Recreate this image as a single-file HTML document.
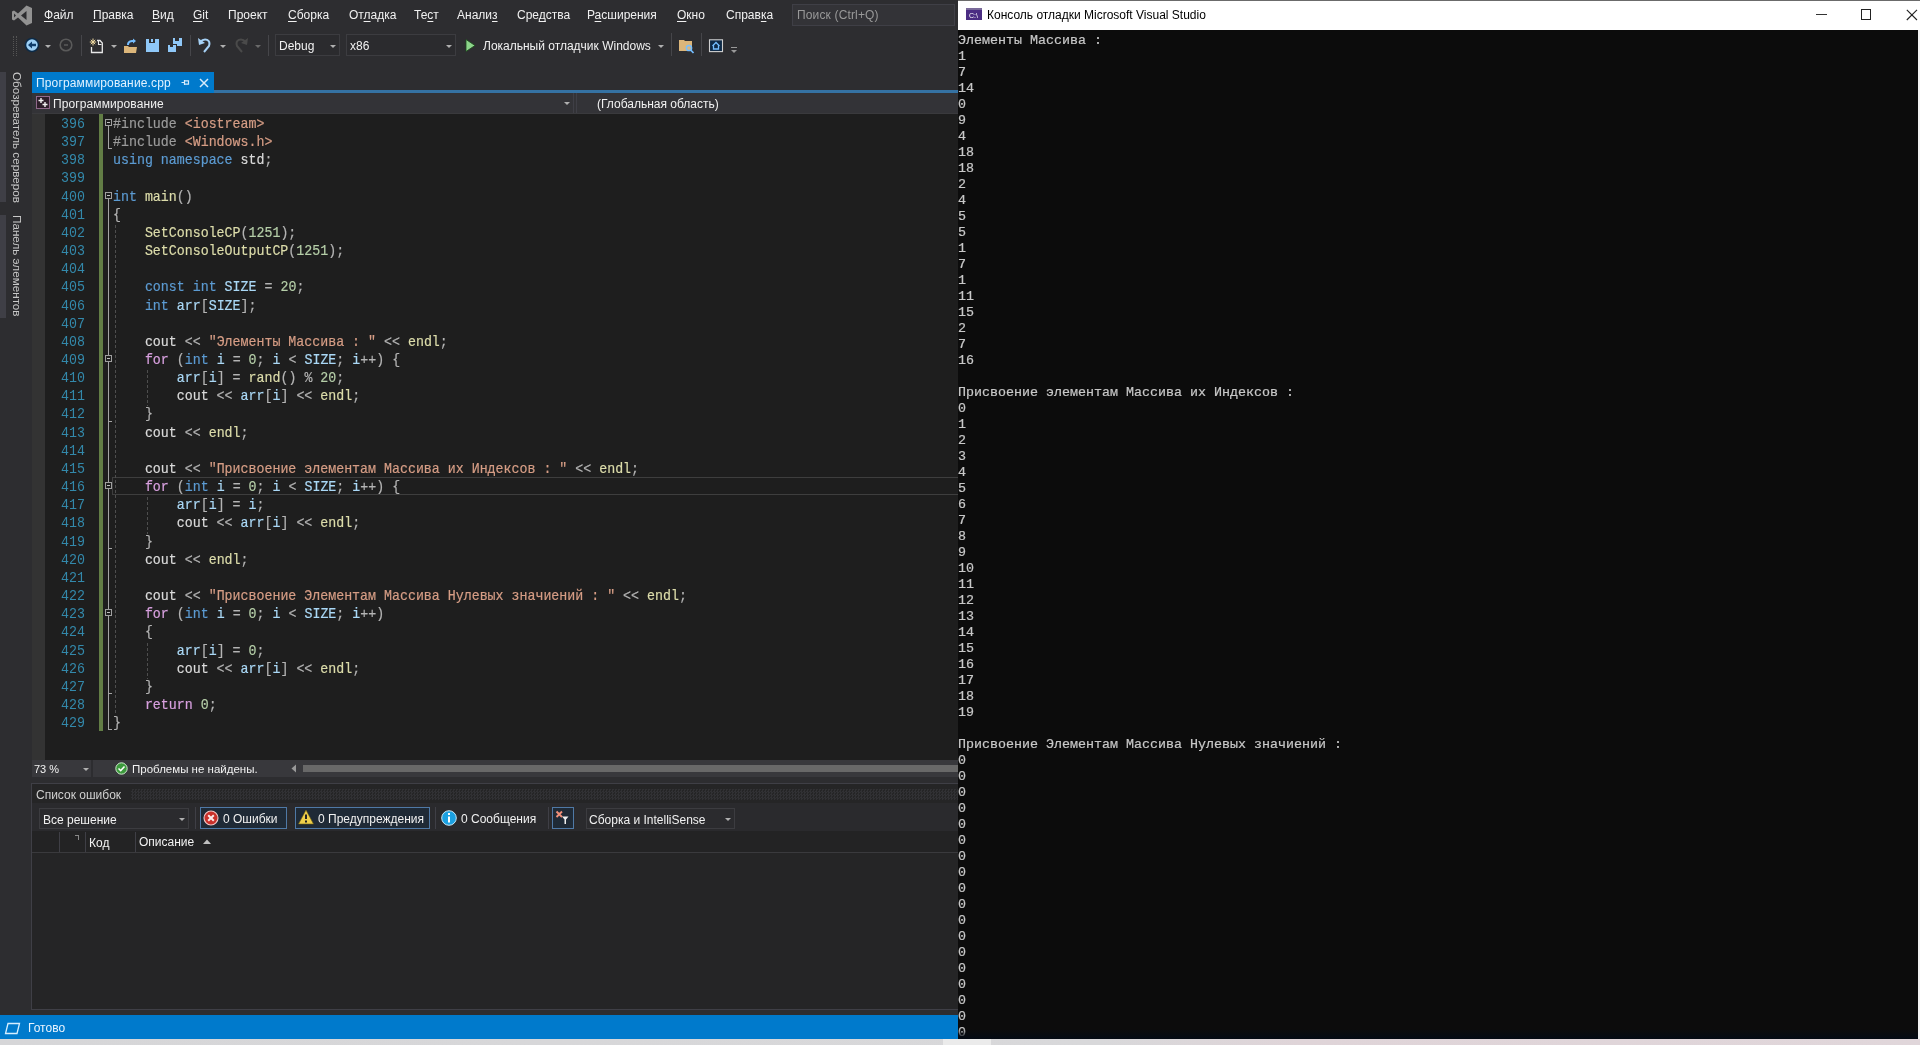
<!DOCTYPE html>
<html><head><meta charset="utf-8">
<style>
*{margin:0;padding:0;box-sizing:border-box}
html,body{will-change:transform;width:1920px;height:1045px;overflow:hidden;background:#2d2d30;font-family:"Liberation Sans",sans-serif;position:relative}
.a{position:absolute}
u{text-decoration:underline;text-underline-offset:2px;text-decoration-thickness:1px}
.mt{font-size:12px;color:#f1f1f1;white-space:nowrap;line-height:14px}
.code{left:113px;-webkit-text-stroke:0.2px;transform:scaleX(0.8853);transform-origin:0 0;font-family:"Liberation Mono",monospace;font-size:15px;line-height:18.16px;white-space:pre;color:#dcdcdc}
.ln{left:44px;transform:scaleX(0.8853);transform-origin:100% 0;font-family:"Liberation Mono",monospace;font-size:15px;line-height:18.16px;color:#3389ab;text-align:right;width:41px}
.kw{color:#5c9bd2}.fl{color:#d8a0df}.fn{color:#dcdcaa}.st{color:#d69d85}.nu{color:#b5cea8}.va{color:#aad8f6}.pu{color:#b4b4b4}.pp{color:#9b9b9b}.gl{color:#dadada}
.con{font-family:"Liberation Mono",monospace;font-size:13.33px;white-space:pre;color:#c8c8c8;line-height:16px;-webkit-text-stroke:0.2px}
.obox{left:105px;width:7px;height:7px;border:1px solid #a0a0a0;background:#1e1e1e}
.obox:after{content:"";position:absolute;left:1px;top:2px;width:3px;height:1px;background:#c0c0c0}
.ovl{left:108px;width:1px;background:#a5a5a5}
.otick{left:108px;width:4px;height:1px;background:#a5a5a5}
.gd{width:1px;background:repeating-linear-gradient(#4e4e4e 0 3px,transparent 3px 5px)}
.sep{width:1px;background:#46464a}
.arr{width:0;height:0;border-left:3px solid transparent;border-right:3px solid transparent;border-top:3px solid #b0b0b0}
.combo{background:#2b2b2e;border:1px solid #3c3c40}
.btn{border:1px solid #4f79a6;background:#1f2a36}
</style></head><body>
<!-- ===== VS menu bar ===== -->
<svg class="a" style="left:11px;top:5px" width="22" height="21" viewBox="0 0 22 21"><path d="M15.5 0.5 L21 3 V18 L15.5 20.5 L7 12.5 L3 15.5 L1 14.5 V6.5 L3 5.5 L7 8.5 Z M15.5 6 L10 10.5 L15.5 15 Z M3 8.5 V12.5 L5 10.5 Z" fill="#929292" fill-rule="evenodd"/></svg>
<div class="a mt" style="left:44px;top:8px"><u>Ф</u>айл</div>
<div class="a mt" style="left:93px;top:8px"><u>П</u>равка</div>
<div class="a mt" style="left:152px;top:8px"><u>В</u>ид</div>
<div class="a mt" style="left:193px;top:8px"><u>G</u>it</div>
<div class="a mt" style="left:228px;top:8px">П<u>р</u>оект</div>
<div class="a mt" style="left:288px;top:8px"><u>С</u>борка</div>
<div class="a mt" style="left:349px;top:8px">От<u>л</u>адка</div>
<div class="a mt" style="left:414px;top:8px">Те<u>с</u>т</div>
<div class="a mt" style="left:457px;top:8px">Анали<u>з</u></div>
<div class="a mt" style="left:517px;top:8px">Сре<u>д</u>ства</div>
<div class="a mt" style="left:587px;top:8px">Р<u>а</u>сширения</div>
<div class="a mt" style="left:677px;top:8px"><u>О</u>кно</div>
<div class="a mt" style="left:726px;top:8px">Справ<u>к</u>а</div>
<div class="a" style="left:792px;top:4px;width:163px;height:22px;background:#333337;border:1px solid #3f3f46"></div>
<div class="a mt" style="left:797px;top:8px;color:#999;letter-spacing:0.15px">Поиск (Ctrl+Q)</div>

<!-- ===== toolbar ===== -->
<div class="a" style="left:13px;top:36px;width:4px;height:20px;border-left:1px dotted #555;border-right:1px dotted #555"></div>
<svg class="a" style="left:24px;top:37px" width="16" height="16" viewBox="0 0 16 16"><circle cx="8" cy="8" r="6.5" fill="#9ccff5" stroke="#0c2a47" stroke-width="1.5"/><path d="M4 8 L8 4.5 V6.8 H12 V9.2 H8 V11.5 Z" fill="#0f3d6b"/></svg>
<div class="a arr" style="left:45px;top:45px"></div>
<svg class="a" style="left:58px;top:37px" width="16" height="16" viewBox="0 0 16 16"><circle cx="8" cy="8" r="5.8" fill="none" stroke="#5a5a5a" stroke-width="1.6"/><path d="M6 8 H10" stroke="#5a5a5a" stroke-width="1.5"/></svg>
<div class="a sep" style="left:81px;top:35px;height:21px"></div>
<svg class="a" style="left:89px;top:38px" width="16" height="16" viewBox="0 0 16 16"><path d="M2.5 9 V14.5 H13.3 V5 L11 2.5 H8" fill="none" stroke="#e8e8e8" stroke-width="1.3"/><path d="M9.5 3 V6.5 H12.5" fill="none" stroke="#e8e8e8" stroke-width="1.1"/><path d="M4 0.5 V7.5 M0.8 4 H7.2 M1.8 1.8 L6.2 6.2 M6.2 1.8 L1.8 6.2" stroke="#efd9a0" stroke-width="1"/></svg>
<div class="a arr" style="left:111px;top:45px"></div>
<svg class="a" style="left:123px;top:38px" width="16" height="16" viewBox="0 0 16 16"><path d="M1 8 H5 L6 9 H14 L13 15 H1 Z" fill="#dcb67a"/><path d="M4 7 C4 3 7 2 10 2 V0.5 L13 3 L10 5.5 V4 C7 4 6 5 6 7 Z" fill="#75beff"/></svg>
<svg class="a" style="left:145px;top:38px" width="16" height="16" viewBox="0 0 16 16"><path d="M1 1 H4 V5 H10 V1 H14 V14 H1 Z" fill="#8fc8f8"/><rect x="6" y="1" width="2" height="3" fill="#8fc8f8"/></svg>
<svg class="a" style="left:167px;top:37px" width="16" height="16" viewBox="0 0 16 16"><path d="M1 8 H3 V10 H6 V8 H9 V15 H1 Z" fill="#8fc8f8"/><path d="M6 1 H8 V4 H12 V1 H15 V9 H10 V7 H6 Z" fill="#8fc8f8"/></svg>
<div class="a sep" style="left:190px;top:35px;height:21px"></div>
<svg class="a" style="left:197px;top:37px" width="16" height="17" viewBox="0 0 16 17"><path d="M3 5 C8 0 14 3 12 9 L7 15" fill="none" stroke="#a6d1f5" stroke-width="2"/><path d="M1 1 L2 8 L8 6 Z" fill="#a6d1f5"/></svg>
<div class="a arr" style="left:220px;top:45px"></div>
<svg class="a" style="left:233px;top:37px" width="16" height="17" viewBox="0 0 16 17"><path d="M13 5 C8 0 2 3 4 9 L9 15" fill="none" stroke="#4a4a4a" stroke-width="2"/><path d="M15 1 L14 8 L8 6 Z" fill="#4a4a4a"/></svg>
<div class="a arr" style="left:255px;top:45px;border-top-color:#6a6a6a"></div>
<div class="a sep" style="left:268px;top:35px;height:21px"></div>
<div class="a combo" style="left:275px;top:34px;width:65px;height:22px"></div>
<div class="a mt" style="left:279px;top:39px">Debug</div>
<div class="a arr" style="left:330px;top:45px"></div>
<div class="a combo" style="left:346px;top:34px;width:110px;height:22px"></div>
<div class="a mt" style="left:350px;top:39px">x86</div>
<div class="a arr" style="left:446px;top:45px"></div>
<svg class="a" style="left:465px;top:39px" width="11" height="13" viewBox="0 0 11 13"><path d="M1 0.5 L10 6.5 L1 12.5 Z" fill="#8cd48a" stroke="#1a4a1a" stroke-width="0.8"/></svg>
<div class="a mt" style="left:483px;top:39px">Локальный отладчик Windows</div>
<div class="a arr" style="left:658px;top:45px"></div>
<div class="a sep" style="left:671px;top:33px;height:23px"></div>
<svg class="a" style="left:678px;top:38px" width="17" height="16" viewBox="0 0 17 16"><path d="M1 2 H6 L7 3 H14 V13 H1 Z" fill="#dcb67a"/><circle cx="11" cy="10" r="2.6" fill="none" stroke="#75beff" stroke-width="1.5"/><path d="M12.8 12 L15.5 15" stroke="#75beff" stroke-width="1.7"/></svg>
<div class="a sep" style="left:701px;top:33px;height:23px"></div>
<svg class="a" style="left:708px;top:38px" width="16" height="15" viewBox="0 0 16 15"><rect x="1.5" y="1.8" width="13" height="11.8" fill="#0e2a47" stroke="#d0d0d0" stroke-width="1.1"/><path d="M4.5 8 L8 4.5 L11.5 8 M5.5 7.5 V11 H10.5 V7.5" fill="none" stroke="#75beff" stroke-width="1.3"/></svg>
<svg class="a" style="left:730px;top:47px" width="8" height="8" viewBox="0 0 8 8"><rect x="1" y="0" width="6" height="1" fill="#999"/><path d="M1 3 H7 L4 6 Z" fill="#999"/></svg>

<!-- ===== left tool strip ===== -->
<div class="a" style="left:0;top:72px;width:6px;height:130px;background:#3f3f46"></div>
<div class="a" style="left:0;top:215px;width:6px;height:103px;background:#3f3f46"></div>
<div class="a mt" style="left:10px;top:72px;writing-mode:vertical-rl;color:#c8c8c8;font-size:11.7px;line-height:14px">Обозреватель серверов</div>
<div class="a mt" style="left:10px;top:215px;writing-mode:vertical-rl;color:#c8c8c8;font-size:11.7px;line-height:14px">Панель элементов</div>

<!-- ===== document tab ===== -->
<div class="a" style="left:32px;top:72px;width:182px;height:21px;background:#007acc"></div>
<div class="a" style="left:214px;top:90px;width:744px;height:3px;background:#3572a3"></div>
<div class="a mt" style="left:36px;top:76px;color:#e0f2ff;letter-spacing:0.15px">Программирование.cpp</div>
<svg class="a" style="left:181px;top:78px" width="9" height="9" viewBox="0 0 9 9"><path d="M0.5 4.5 H3 M3.5 2 V7 M3.5 2.8 H7.5 V6.2 H3.5" fill="none" stroke="#d8ecfb" stroke-width="1.2"/></svg>
<svg class="a" style="left:199px;top:78px" width="10" height="10" viewBox="0 0 10 10"><path d="M1 1 L9 9 M9 1 L1 9" stroke="#d8ecfb" stroke-width="1.5"/></svg>

<!-- ===== nav bar ===== -->
<div class="a" style="left:32px;top:93px;width:926px;height:20px;background:#333337"></div>
<div class="a" style="left:32px;top:113px;width:926px;height:1px;background:#3a3a3d"></div>
<svg class="a" style="left:36px;top:96px" width="14" height="13" viewBox="0 0 14 13"><rect x="0.5" y="0.5" width="13" height="12" fill="#2e1e2a" stroke="#9a7094" stroke-width="0.9"/><path d="M2.5 4.5 H7.5 M5 2 V7 M6.5 8.5 H11.5 M9 6 V11" stroke="#f0f0f0" stroke-width="1.4"/></svg>
<div class="a mt" style="left:53px;top:97px;letter-spacing:0.1px">Программирование</div>
<div class="a arr" style="left:564px;top:102px"></div>
<div class="a sep" style="left:573px;top:93px;height:20px;background:#3f3f46"></div>
<div class="a sep" style="left:576px;top:93px;height:20px;background:#3f3f46"></div>
<div class="a mt" style="left:597px;top:97px">(Глобальная область)</div>

<!-- ===== editor ===== -->
<div class="a" style="left:32px;top:114px;width:926px;height:646px;background:#1e1e1e"></div>
<div class="a" style="left:32px;top:114px;width:13px;height:646px;background:#333333"></div>
<div class="a" style="left:99px;top:114px;width:4px;height:617px;background:#627d45"></div>
<div class="a" style="left:112px;top:477px;width:846px;height:18px;border:1.5px solid #3e3e3e;border-right:none"></div>
<div class="a ovl" style="top:124.9px;height:24.3px"></div>
<div class="a otick" style="top:148.2px"></div>
<div class="a ovl" style="top:197.5px;height:532.8px"></div>
<div class="a otick" style="top:729.3px"></div>
<div class="a ovl" style="top:361.0px;height:60.6px"></div>
<div class="a otick" style="top:420.6px"></div>
<div class="a ovl" style="top:488.1px;height:60.6px"></div>
<div class="a otick" style="top:547.7px"></div>
<div class="a ovl" style="top:615.2px;height:78.8px"></div>
<div class="a otick" style="top:693.0px"></div>
<div class="a obox" style="top:118.9px"></div>
<div class="a obox" style="top:191.5px"></div>
<div class="a obox" style="top:355.0px"></div>
<div class="a obox" style="top:482.1px"></div>
<div class="a obox" style="top:609.2px"></div>
<div class="a gd" style="left:115px;top:224.9px;height:490.3px"></div>
<div class="a gd" style="left:147px;top:370.1px;height:36.3px"></div>
<div class="a gd" style="left:147px;top:497.3px;height:36.3px"></div>
<div class="a gd" style="left:147px;top:642.5px;height:36.3px"></div>
<div class="a ln" style="top:115.90px">396</div>
<div class="a code" style="top:115.90px"><span class="pp">#include</span> <span class="st">&lt;iostream&gt;</span></div>
<div class="a ln" style="top:134.06px">397</div>
<div class="a code" style="top:134.06px"><span class="pp">#include</span> <span class="st">&lt;Windows.h&gt;</span></div>
<div class="a ln" style="top:152.22px">398</div>
<div class="a code" style="top:152.22px"><span class="kw">using</span> <span class="kw">namespace</span> <span class="gl">std</span><span class="pu">;</span></div>
<div class="a ln" style="top:170.38px">399</div>
<div class="a ln" style="top:188.54px">400</div>
<div class="a code" style="top:188.54px"><span class="kw">int</span> <span class="fn">main</span><span class="pu">()</span></div>
<div class="a ln" style="top:206.70px">401</div>
<div class="a code" style="top:206.70px"><span class="pu">{</span></div>
<div class="a ln" style="top:224.86px">402</div>
<div class="a code" style="top:224.86px">    <span class="fn">SetConsoleCP</span><span class="pu">(</span><span class="nu">1251</span><span class="pu">);</span></div>
<div class="a ln" style="top:243.02px">403</div>
<div class="a code" style="top:243.02px">    <span class="fn">SetConsoleOutputCP</span><span class="pu">(</span><span class="nu">1251</span><span class="pu">);</span></div>
<div class="a ln" style="top:261.18px">404</div>
<div class="a ln" style="top:279.34px">405</div>
<div class="a code" style="top:279.34px">    <span class="kw">const</span> <span class="kw">int</span> <span class="va">SIZE</span> <span class="pu">=</span> <span class="nu">20</span><span class="pu">;</span></div>
<div class="a ln" style="top:297.50px">406</div>
<div class="a code" style="top:297.50px">    <span class="kw">int</span> <span class="va">arr</span><span class="pu">[</span><span class="va">SIZE</span><span class="pu">];</span></div>
<div class="a ln" style="top:315.66px">407</div>
<div class="a ln" style="top:333.82px">408</div>
<div class="a code" style="top:333.82px">    <span class="gl">cout</span> <span class="pu">&lt;&lt;</span> <span class="st">"Элементы Массива : "</span> <span class="pu">&lt;&lt;</span> <span class="fn">endl</span><span class="pu">;</span></div>
<div class="a ln" style="top:351.98px">409</div>
<div class="a code" style="top:351.98px">    <span class="fl">for</span> <span class="pu">(</span><span class="kw">int</span> <span class="va">i</span> <span class="pu">=</span> <span class="nu">0</span><span class="pu">;</span> <span class="va">i</span> <span class="pu">&lt;</span> <span class="va">SIZE</span><span class="pu">;</span> <span class="va">i</span><span class="pu">++)</span> <span class="pu">{</span></div>
<div class="a ln" style="top:370.14px">410</div>
<div class="a code" style="top:370.14px">        <span class="va">arr</span><span class="pu">[</span><span class="va">i</span><span class="pu">]</span> <span class="pu">=</span> <span class="fn">rand</span><span class="pu">()</span> <span class="pu">%</span> <span class="nu">20</span><span class="pu">;</span></div>
<div class="a ln" style="top:388.30px">411</div>
<div class="a code" style="top:388.30px">        <span class="gl">cout</span> <span class="pu">&lt;&lt;</span> <span class="va">arr</span><span class="pu">[</span><span class="va">i</span><span class="pu">]</span> <span class="pu">&lt;&lt;</span> <span class="fn">endl</span><span class="pu">;</span></div>
<div class="a ln" style="top:406.46px">412</div>
<div class="a code" style="top:406.46px">    <span class="pu">}</span></div>
<div class="a ln" style="top:424.62px">413</div>
<div class="a code" style="top:424.62px">    <span class="gl">cout</span> <span class="pu">&lt;&lt;</span> <span class="fn">endl</span><span class="pu">;</span></div>
<div class="a ln" style="top:442.78px">414</div>
<div class="a ln" style="top:460.94px">415</div>
<div class="a code" style="top:460.94px">    <span class="gl">cout</span> <span class="pu">&lt;&lt;</span> <span class="st">"Присвоение элементам Массива их Индексов : "</span> <span class="pu">&lt;&lt;</span> <span class="fn">endl</span><span class="pu">;</span></div>
<div class="a ln" style="top:479.10px">416</div>
<div class="a code" style="top:479.10px">    <span class="fl">for</span> <span class="pu">(</span><span class="kw">int</span> <span class="va">i</span> <span class="pu">=</span> <span class="nu">0</span><span class="pu">;</span> <span class="va">i</span> <span class="pu">&lt;</span> <span class="va">SIZE</span><span class="pu">;</span> <span class="va">i</span><span class="pu">++)</span> <span class="pu">{</span></div>
<div class="a ln" style="top:497.26px">417</div>
<div class="a code" style="top:497.26px">        <span class="va">arr</span><span class="pu">[</span><span class="va">i</span><span class="pu">]</span> <span class="pu">=</span> <span class="va">i</span><span class="pu">;</span></div>
<div class="a ln" style="top:515.42px">418</div>
<div class="a code" style="top:515.42px">        <span class="gl">cout</span> <span class="pu">&lt;&lt;</span> <span class="va">arr</span><span class="pu">[</span><span class="va">i</span><span class="pu">]</span> <span class="pu">&lt;&lt;</span> <span class="fn">endl</span><span class="pu">;</span></div>
<div class="a ln" style="top:533.58px">419</div>
<div class="a code" style="top:533.58px">    <span class="pu">}</span></div>
<div class="a ln" style="top:551.74px">420</div>
<div class="a code" style="top:551.74px">    <span class="gl">cout</span> <span class="pu">&lt;&lt;</span> <span class="fn">endl</span><span class="pu">;</span></div>
<div class="a ln" style="top:569.90px">421</div>
<div class="a ln" style="top:588.06px">422</div>
<div class="a code" style="top:588.06px">    <span class="gl">cout</span> <span class="pu">&lt;&lt;</span> <span class="st">"Присвоение Элементам Массива Нулевых значиений : "</span> <span class="pu">&lt;&lt;</span> <span class="fn">endl</span><span class="pu">;</span></div>
<div class="a ln" style="top:606.22px">423</div>
<div class="a code" style="top:606.22px">    <span class="fl">for</span> <span class="pu">(</span><span class="kw">int</span> <span class="va">i</span> <span class="pu">=</span> <span class="nu">0</span><span class="pu">;</span> <span class="va">i</span> <span class="pu">&lt;</span> <span class="va">SIZE</span><span class="pu">;</span> <span class="va">i</span><span class="pu">++)</span></div>
<div class="a ln" style="top:624.38px">424</div>
<div class="a code" style="top:624.38px">    <span class="pu">{</span></div>
<div class="a ln" style="top:642.54px">425</div>
<div class="a code" style="top:642.54px">        <span class="va">arr</span><span class="pu">[</span><span class="va">i</span><span class="pu">]</span> <span class="pu">=</span> <span class="nu">0</span><span class="pu">;</span></div>
<div class="a ln" style="top:660.70px">426</div>
<div class="a code" style="top:660.70px">        <span class="gl">cout</span> <span class="pu">&lt;&lt;</span> <span class="va">arr</span><span class="pu">[</span><span class="va">i</span><span class="pu">]</span> <span class="pu">&lt;&lt;</span> <span class="fn">endl</span><span class="pu">;</span></div>
<div class="a ln" style="top:678.86px">427</div>
<div class="a code" style="top:678.86px">    <span class="pu">}</span></div>
<div class="a ln" style="top:697.02px">428</div>
<div class="a code" style="top:697.02px">    <span class="fl">return</span> <span class="nu">0</span><span class="pu">;</span></div>
<div class="a ln" style="top:715.18px">429</div>
<div class="a code" style="top:715.18px"><span class="pu">}</span></div>

<!-- ===== editor status row ===== -->
<div class="a" style="left:32px;top:760px;width:926px;height:17px;background:#38383c"></div>
<div class="a" style="left:91px;top:760px;width:2px;height:17px;background:#2d2d30"></div>
<div class="a mt" style="left:34px;top:762px;font-size:11px">73 %</div>
<div class="a arr" style="left:83px;top:768px"></div>
<svg class="a" style="left:115px;top:762px" width="13" height="13" viewBox="0 0 13 13"><circle cx="6.5" cy="6.5" r="5.7" fill="#3c9a3c" stroke="#cfe9cf" stroke-width="1"/><path d="M3.5 6.5 L5.7 8.6 L9.5 4.5" fill="none" stroke="#fff" stroke-width="1.5"/></svg>
<div class="a mt" style="left:132px;top:762px;font-size:11.5px">Проблемы не найдены.</div>
<svg class="a" style="left:291px;top:764px" width="6" height="9" viewBox="0 0 6 9"><path d="M5 0.5 L0.5 4.5 L5 8.5 Z" fill="#999"/></svg>
<div class="a" style="left:303px;top:765px;width:655px;height:7px;background:#686868"></div>

<!-- ===== error list ===== -->
<div class="a" style="left:31px;top:783px;width:927px;height:227px;background:#252526;border:1px solid #3f3f46;border-right:none"></div>
<div class="a" style="left:32px;top:803px;width:926px;height:28px;background:#2a2a2d"></div>
<div class="a mt" style="left:36px;top:788px;color:#d0d0d0">Список ошибок</div>
<div class="a" style="left:131px;top:789px;width:827px;height:11px;background:repeating-conic-gradient(#313134 0 25%,#252526 0 50%) 0 0/3px 3px"></div>
<div class="a combo" style="left:39px;top:808px;width:150px;height:21px"></div>
<div class="a mt" style="left:43px;top:813px">Все решение</div>
<div class="a arr" style="left:179px;top:818px"></div>
<div class="a sep" style="left:195px;top:807px;height:22px;background:#3f3f46"></div>
<div class="a btn" style="left:200px;top:807px;width:87px;height:22px"></div>
<svg class="a" style="left:203px;top:810px" width="16" height="16" viewBox="0 0 16 16"><circle cx="8" cy="8" r="7" fill="#c9302a" stroke="#f0c8c8" stroke-width="1.1"/><path d="M5.2 5.2 L10.8 10.8 M10.8 5.2 L5.2 10.8" stroke="#fbe9e9" stroke-width="2"/></svg>
<div class="a mt" style="left:223px;top:812px">0 Ошибки</div>
<div class="a btn" style="left:295px;top:807px;width:135px;height:22px"></div>
<svg class="a" style="left:298px;top:809px" width="16" height="16" viewBox="0 0 16 16"><path d="M8 1 L15.5 15 H0.5 Z" fill="#f0d04a" stroke="#6a5a10" stroke-width="0.6"/><path d="M8 5.5 V10" stroke="#222" stroke-width="2"/><rect x="7" y="11.5" width="2" height="2" fill="#222"/></svg>
<div class="a mt" style="left:318px;top:812px">0 Предупреждения</div>
<div class="a sep" style="left:435px;top:807px;height:22px;background:#3f3f46"></div>
<svg class="a" style="left:441px;top:810px" width="16" height="16" viewBox="0 0 16 16"><circle cx="8" cy="8" r="7.3" fill="#1ba1e2" stroke="#c7e7f7" stroke-width="1"/><rect x="7" y="6.5" width="2" height="6" fill="#fff"/><rect x="7" y="3" width="2" height="2" fill="#fff"/></svg>
<div class="a mt" style="left:461px;top:812px">0 Сообщения</div>
<div class="a sep" style="left:548px;top:807px;height:22px;background:#3f3f46"></div>
<div class="a btn" style="left:552px;top:807px;width:22px;height:22px"></div>
<svg class="a" style="left:555px;top:810px" width="16" height="16" viewBox="0 0 16 16"><path d="M1.5 1.5 L7 7 M7 1.5 L1.5 7" stroke="#f0907a" stroke-width="1.9"/><path d="M7 6.5 H13.5 L11 9.5 V14 H9.5 V9.5 Z" fill="#f0f0f0"/></svg>
<div class="a combo" style="left:586px;top:808px;width:149px;height:21px"></div>
<div class="a mt" style="left:589px;top:813px">Сборка и IntelliSense</div>
<div class="a arr" style="left:725px;top:818px"></div>
<div class="a" style="left:32px;top:831px;width:926px;height:21px;background:#232324"></div>
<div class="a sep" style="left:59px;top:832px;height:20px;background:#3f3f46"></div>
<div class="a sep" style="left:85px;top:832px;height:20px;background:#3f3f46"></div>
<div class="a sep" style="left:135px;top:832px;height:20px;background:#3f3f46"></div>
<div class="a" style="left:75px;top:835px;width:4px;height:5px;border-top:1px solid #888;border-right:1px solid #888"></div>
<div class="a mt" style="left:89px;top:836px">Код</div>
<div class="a mt" style="left:139px;top:835px">Описание</div>
<svg class="a" style="left:203px;top:839px" width="8" height="5" viewBox="0 0 8 5"><path d="M0 5 L4 0.5 L8 5 Z" fill="#c0c0c0"/></svg>
<div class="a" style="left:32px;top:852px;width:926px;height:1px;background:#3a3a3d"></div>

<!-- ===== status bar ===== -->
<div class="a" style="left:0;top:1015px;width:958px;height:24px;background:#007acc"></div>
<svg class="a" style="left:4px;top:1022px" width="17" height="13" viewBox="0 0 17 13"><path d="M4 1.5 H15.5 L13 11.5 H1.5 Z" fill="none" stroke="#d6efff" stroke-width="1.3"/></svg>
<div class="a mt" style="left:28px;top:1021px;color:#e8f4ff">Готово</div>

<!-- ===== console window ===== -->
<div class="a" style="left:958px;top:0;width:962px;height:1039px;background:#0c0c0c;overflow:hidden">
<div class="a" style="left:0;top:0;width:962px;height:1px;background:#6b6b6b"></div>
<div class="a" style="left:0;top:1px;width:962px;height:29px;background:#ffffff"></div>
<svg class="a" style="left:8px;top:8px" width="16" height="12" viewBox="0 0 16 12"><rect x="0" y="0" width="16" height="12" fill="#4b2d83"/><rect x="0" y="0" width="16" height="2" fill="#7a6a9a"/><text x="3" y="10" font-size="7" fill="#fff" font-family="Liberation Sans">C:\</text></svg>
<div class="a mt" style="left:29px;top:8px;color:#000">Консоль отладки Microsoft Visual Studio</div>
<div class="a" style="left:858px;top:14px;width:11px;height:1px;background:#333"></div>
<div class="a" style="left:903px;top:9px;width:10px;height:11px;border:1.3px solid #222"></div>
<svg class="a" style="left:948px;top:9px" width="12" height="12" viewBox="0 0 12 12"><path d="M0.8 0.8 L11 11 M11 0.8 L0.8 11" stroke="#222" stroke-width="1.1"/></svg>
<div class="a con" style="left:0;top:33px">Элементы Массива :
1
7
14
0
9
4
18
18
2
4
5
5
1
7
1
11
15
2
7
16

Присвоение элементам Массива их Индексов :
0
1
2
3
4
5
6
7
8
9
10
11
12
13
14
15
16
17
18
19

Присвоение Элементам Массива Нулевых значиений :
0
0
0
0
0
0
0
0
0
0
0
0
0
0
0
0
0
0
0
0</div>
<div class="a" style="left:960px;top:30px;width:2px;height:1009px;background:#f4f4f4"></div>
</div>
<div class="a" style="left:958px;top:1029px;width:960px;height:10px;background:linear-gradient(#0c0c0c00,#030a14)"></div>
<div class="a" style="left:0;top:1039px;width:1920px;height:6px;background:linear-gradient(90deg,#d6d6d8 0,#d8d8da 1100px,#dfd4d8 1300px,#e0d6da 1920px)"></div>
<div class="a" style="left:943px;top:1039px;width:48px;height:6px;background:#ebebeb"></div>
</body></html>
